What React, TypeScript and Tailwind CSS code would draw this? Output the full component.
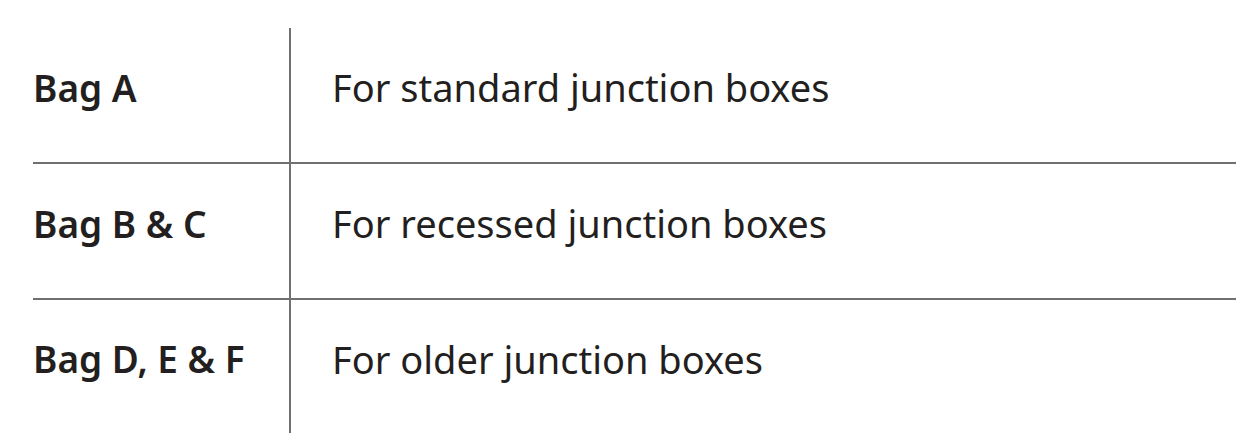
const rows = [
  { bag: "Bag A", use: "For standard junction boxes" },
  { bag: "Bag B & C", use: "For recessed junction boxes" },
  { bag: "Bag D, E & F", use: "For older junction boxes" },
];

export default function App() {
  return (
    <div className="h-[445px] w-[1249px] bg-white pl-[33px] pt-[28px] font-['Noto_Sans',sans-serif] text-[#231f20]">
      <div className="w-[1203px]">
        {rows.map((row, i) => (
          <div
            key={row.bag}
            className={`flex ${i < rows.length - 1 ? "h-[136px] border-b-2 border-[#707070]" : "h-[133px]"}`}
          >
            <div className="flex w-[258px] items-center border-r-2 border-[#707070] pb-[16px]">
              <span className="text-[37px] font-semibold leading-none">{row.bag}</span>
            </div>
            <div className="flex items-center pb-[16px] pl-[41px]">
              <span className="text-[38px] leading-none">{row.use}</span>
            </div>
          </div>
        ))}
      </div>
    </div>
  );
}
